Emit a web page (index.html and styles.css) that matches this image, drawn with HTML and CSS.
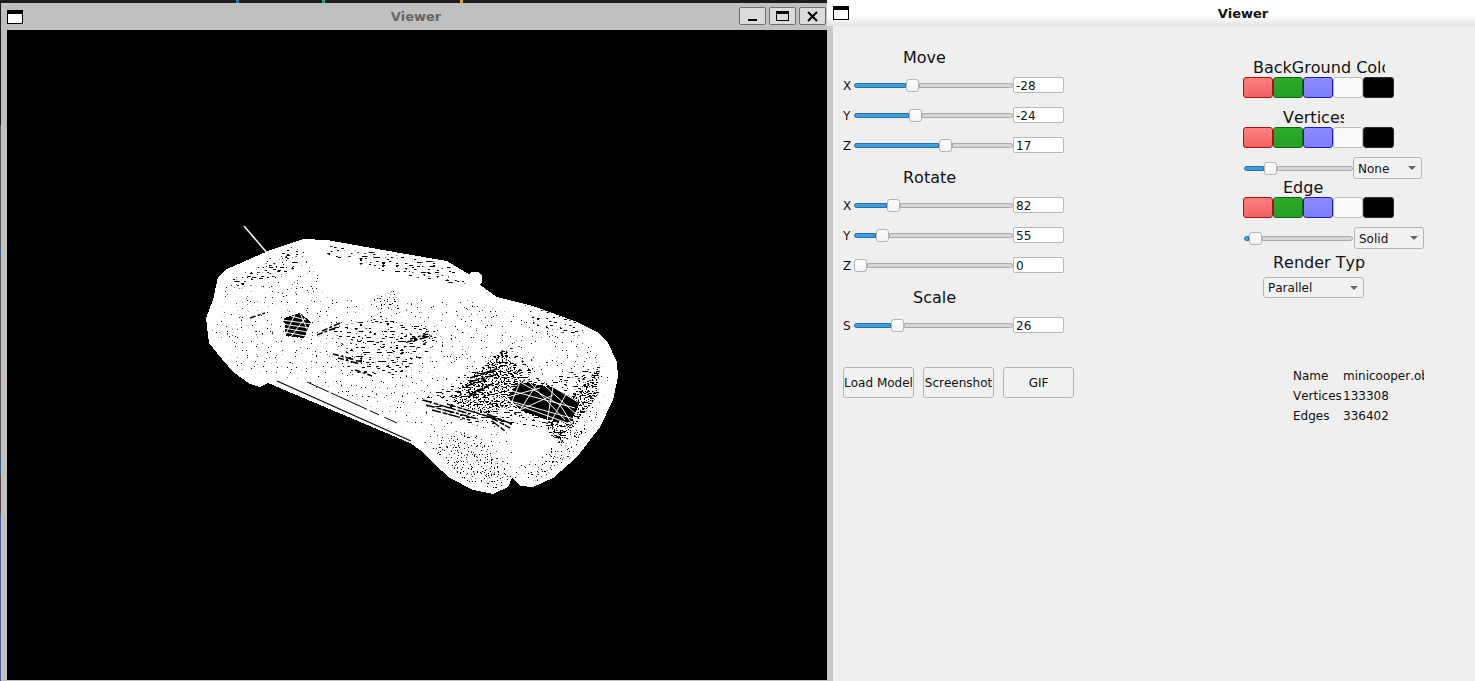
FILE: index.html
```html
<!DOCTYPE html>
<html lang="en">
  <head>
    <meta charset="UTF-8" />
    <title>Viewer</title>
    <link rel="stylesheet" href="styles.css">
  </head>
  <body>
    <div class="desktop">
      <span class="strip"></span>
      <span class="tick tick-a"></span>
      <span class="tick tick-b"></span>
      <span class="tick tick-c"></span>

      <!-- render window -->
      <section class="window window-render">
        <header class="render-title">
          <span class="win-icon"></span>
          <span class="render-name">Viewer</span>
          <span class="win-button">
            <svg width="25" height="16" viewBox="0 0 25 16"><path d="M8 11h9v2H8z" /></svg>
          </span>
          <span class="win-button">
            <svg width="25" height="16" viewBox="0 0 25 16"><path d="M6 3h13v10H6zM7 6v6h11V6z" fill-rule="evenodd" /></svg>
          </span>
          <span class="win-button">
            <svg width="25" height="16" viewBox="0 0 25 16"><path d="M8 4l9 9M17 4l-9 9" fill="none" stroke="#000" stroke-width="2" /></svg>
          </span>
        </header>
        <div class="gl-view">
          <svg class="car" viewBox="7 30 820 650">
            <defs>
              <!-- wireframe gaps: thresholded noise over a black region -->
              <filter id="speckLight" x="0" y="0" width="1" height="1" color-interpolation-filters="sRGB">
                <feTurbulence type="fractalNoise" baseFrequency="0.8" numOctaves="1" seed="4" />
                <feColorMatrix values="0 0 0 0 0  0 0 0 0 0  0 0 0 0 0  0 0 0 30 -21" />
                <feComposite in="SourceGraphic" operator="in" />
              </filter>
              <filter id="speckMid" x="0" y="0" width="1" height="1" color-interpolation-filters="sRGB">
                <feTurbulence type="fractalNoise" baseFrequency="0.7" numOctaves="1" seed="9" />
                <feColorMatrix values="0 0 0 0 0  0 0 0 0 0  0 0 0 0 0  0 0 0 30 -19.5" />
                <feComposite in="SourceGraphic" operator="in" />
              </filter>
              <filter id="speckDash" x="0" y="0" width="1" height="1" color-interpolation-filters="sRGB">
                <feTurbulence type="fractalNoise" baseFrequency="0.22 0.8" numOctaves="1" seed="2" />
                <feColorMatrix values="0 0 0 0 0  0 0 0 0 0  0 0 0 0 0  0 0 0 30 -18.8" />
                <feComposite in="SourceGraphic" operator="in" />
              </filter>
              <filter id="speckDense" x="0" y="0" width="1" height="1" color-interpolation-filters="sRGB">
                <feTurbulence type="fractalNoise" baseFrequency="0.5 0.9" numOctaves="1" seed="7" />
                <feColorMatrix values="0 0 0 0 0  0 0 0 0 0  0 0 0 0 0  0 0 0 30 -16.2" />
                <feComposite in="SourceGraphic" operator="in" />
              </filter>
            </defs>

            <path class="antenna" d="M244 226L268 254" />
            <circle class="body" cx="475" cy="279" r="7.5" />
            <path class="body" d="M227 269L268 251L303 239L327 240L400 253L447 261L467 273L483 287L497 297L533 306L577 322L597 332L608 343L617 362L618 377L613 400L600 427L577 457L553 478L533 487L520 486L512 478L508 487L493 494L473 490L450 478L433 463L423 452L410 443L268 383L260 387L250 384L233 372L217 353L209 343L206 318L213 300L218 277Z" />

            <!-- sill -->
            <path class="line-black" d="M277 381L411 441" stroke-width="1.2" />
            <path class="line-black dash-sill" d="M307 382L397 423" />

            <!-- speckle regions -->
            <path class="speck-light" d="M222 285L300 250L340 300L470 300L590 340L610 380L590 440L540 482L470 485L420 440L380 410L280 375L240 370L212 330Z" />
            <path class="speck-dash" d="M232 278L292 247L306 250L296 268L240 290Z" />
            <path class="speck-dash" d="M322 245L400 256L448 264L468 286L385 272L322 255Z" />
            <path class="speck-dash" d="M330 328L380 318L440 330L430 350L400 376L350 372L340 350Z" />
            <path class="speck-mid" d="M373 297L395 290L400 310L378 310Z" />
            <path class="speck-dash" d="M525 305L580 322L585 338L530 325Z" />
            <path class="speck-dash" d="M420 398L470 370L510 345L540 380L600 365L598 395L560 445L520 425L470 425Z" />
            <path class="speck-dense" d="M470 378L505 348L525 380L510 408L480 415L450 400Z" />
            <path class="speck-dense" d="M575 395L600 365L598 395L560 445L545 425Z" />
            <path class="speck-mid" d="M425 445L470 430L510 465L500 490L470 485Z" />
            <path class="speck-mid" d="M520 470L590 420L570 458L535 485Z" />

            <!-- dark spots -->
            <path class="line-black dash-spot" stroke-width="1.5" d="M407 342L432 336M410 339L428 334M333 354L362 362M338 358L360 364M317 335L340 326M322 331L340 323M250 318L265 313M355 370L372 376" />

            <!-- rear window -->
            <path class="dark" d="M284 318L300 313L311 322L304 338L286 336Z" />
            <path class="line-white" d="M282 320L312 324M282 324L310 328M283 328L308 332M284 332L306 336M291 316L306 320M296 312L284 338M305 318L290 338M300 313L310 336" />

            <!-- grille -->
            <path class="dark" d="M507 397L520 382L553 387L580 402L571 422L547 420L520 410Z" />
            <path class="line-white" d="M507 400L578 420M512 391L575 408M515 404L570 424M520 382L510 406M520 382L560 405L572 424M537 384L520 410M553 387L547 421M553 387L578 402M566 394L552 420M530 383L565 420M507 397L540 388M520 410L553 395M545 386L578 416" />

            <!-- hatching in front of the hood -->
            <path class="line-black dash-hatch" stroke-width="1.5" d="M423 400L470 414M426 405L478 419M432 410L470 420M447 404L500 420M490 417L510 428M492 421L505 431M487 414L512 424M470 378L500 368M470 382L498 374M466 386L486 380M474 392L492 384M468 397L485 388" />

            <!-- front lamp -->
            <ellipse class="body" cx="530" cy="443" rx="22" ry="17" />
          </svg>
        </div>
      </section>

      <!-- control window -->
      <section class="window window-panel">
        <header class="panel-title">
          <span class="win-icon"></span>
          <span class="panel-name">Viewer</span>
        </header>
        <div class="panel-body">
          <div class="column-left">
            <h2 class="heading heading-left">Move</h2>
            <div class="axis-row">
              <span class="axis-label">X</span>
              <div class="slider"><i class="fill" style="width: 52px"></i><b class="thumb"></b><i class="rest"></i></div>
              <span class="value">-28</span>
            </div>
            <div class="axis-row">
              <span class="axis-label">Y</span>
              <div class="slider"><i class="fill" style="width: 55px"></i><b class="thumb"></b><i class="rest"></i></div>
              <span class="value">-24</span>
            </div>
            <div class="axis-row">
              <span class="axis-label">Z</span>
              <div class="slider"><i class="fill" style="width: 85px"></i><b class="thumb"></b><i class="rest"></i></div>
              <span class="value">17</span>
            </div>

            <h2 class="heading heading-left next">Rotate</h2>
            <div class="axis-row">
              <span class="axis-label">X</span>
              <div class="slider"><i class="fill" style="width: 33px"></i><b class="thumb"></b><i class="rest"></i></div>
              <span class="value">82</span>
            </div>
            <div class="axis-row">
              <span class="axis-label">Y</span>
              <div class="slider"><i class="fill" style="width: 22px"></i><b class="thumb"></b><i class="rest"></i></div>
              <span class="value">55</span>
            </div>
            <div class="axis-row">
              <span class="axis-label">Z</span>
              <div class="slider"><i class="fill" style="width: 0"></i><b class="thumb"></b><i class="rest"></i></div>
              <span class="value">0</span>
            </div>

            <h2 class="heading heading-left next heading-scale">Scale</h2>
            <div class="axis-row">
              <span class="axis-label">S</span>
              <div class="slider"><i class="fill" style="width: 37px"></i><b class="thumb"></b><i class="rest"></i></div>
              <span class="value">26</span>
            </div>

            <div class="actions">
              <button class="action">Load Model</button>
              <button class="action">Screenshot</button>
              <button class="action">GIF</button>
            </div>
          </div>

          <div class="column-right">
            <h2 class="heading clip clip-bg">BackGround Color</h2>
            <div class="swatches">
              <span class="swatch red"></span><span class="swatch green"></span><span class="swatch blue"></span><span class="swatch white"></span><span class="swatch black"></span>
            </div>

            <h2 class="heading clip clip-vertices">Vertices</h2>
            <div class="swatches">
              <span class="swatch red"></span><span class="swatch green"></span><span class="swatch blue"></span><span class="swatch white"></span><span class="swatch black"></span>
            </div>
            <div class="style-row">
              <div class="slider slider-small"><i class="fill" style="width: 20px"></i><b class="thumb"></b><i class="rest"></i></div>
              <div class="combo combo-none">None</div>
            </div>

            <h2 class="heading clip clip-edge">Edge</h2>
            <div class="swatches">
              <span class="swatch red"></span><span class="swatch green"></span><span class="swatch blue"></span><span class="swatch white"></span><span class="swatch black"></span>
            </div>
            <div class="style-row">
              <div class="slider slider-small"><i class="fill" style="width: 5px"></i><b class="thumb"></b><i class="rest"></i></div>
              <div class="combo combo-solid">Solid</div>
            </div>

            <h2 class="heading clip clip-render">Render Type</h2>
            <div class="combo combo-parallel">Parallel</div>

            <dl class="info">
              <dt>Name</dt><dd>minicooper.obj</dd>
              <dt>Vertices</dt><dd>133308</dd>
              <dt>Edges</dt><dd>336402</dd>
            </dl>
          </div>
        </div>
      </section>
    </div>
  </body>
</html>
```

FILE: styles.css
```css
* {
  box-sizing: border-box;
}

html,
body {
  margin: 0;
  height: 100%;
  overflow: hidden;
}

body {
  font-family: "DejaVu Sans", sans-serif;
  font-size: 12px;
  font-kerning: none;
  color: #111;
}

.desktop {
  position: relative;
  width: 1475px;
  height: 681px;
  background: #1c1c1c;
  overflow: hidden;
}

/* what peeks out of the desktop behind the windows */
.strip {
  position: absolute;
  left: 0;
  top: 125px;
  width: 1px;
  height: 556px;
  background: linear-gradient(
    #555 0 22%,
    #3f5a7c 22% 24%,
    #555 24% 45%,
    #6e4a4a 45% 47%,
    #555 47% 60%,
    #3f5a7c 60% 63%,
    #5a4040 63% 70%,
    #3f5f8c 70% 100%
  );
}
.tick {
  position: absolute;
  top: 0;
  width: 3px;
  height: 3px;
}
.tick-a {
  left: 236px;
  background: #1f7fb0;
}
.tick-b {
  left: 322px;
  background: #1aa088;
}
.tick-c {
  left: 460px;
  background: #e0a020;
}

.window {
  position: absolute;
  display: flex;
  flex-direction: column;
}
.window-render {
  left: 1px;
  top: 3px;
  width: 826px;
  height: 678px;
  background: #c0c0c0;
  padding: 0 0 1px 6px;
}
.window-panel {
  left: 827px;
  top: 0;
  width: 648px;
  height: 681px;
  background: #c9c9c9;
  border-top-left-radius: 3px;
}

.win-icon {
  flex: none;
  width: 16px;
  height: 14px;
  background: #fff;
  border: 1px solid #000;
  border-top-width: 4px;
}

/* left window */
.render-title {
  flex: none;
  height: 27px;
  display: flex;
  align-items: center;
  gap: 3px;
  padding-top: 1px;
  padding-right: 1px;
}
.render-name {
  flex: 1;
  padding-left: 78px;
  padding-right: 8px;
  padding-bottom: 2px;
  text-align: center;
  font-size: 13px;
  font-weight: bold;
  color: #666;
}
.win-button {
  flex: none;
  width: 27px;
  height: 18px;
  margin-top: -2px;
  background: #dcdcdc;
  border: 1px solid #707070;
  border-radius: 2px;
}
.win-button svg {
  display: block;
}
.gl-view {
  flex: 1;
  background: #000;
  min-height: 0;
}
.car {
  display: block;
  width: 820px;
  height: 650px;
}
.car .body {
  fill: #fff;
  shape-rendering: crispEdges;
}
.car .dark {
  fill: #000;
  shape-rendering: crispEdges;
}
.antenna {
  fill: none;
  stroke: #fff;
  stroke-width: 1.5;
}
.line-white {
  fill: none;
  stroke: #fff;
  stroke-width: 1;
}
.line-black {
  fill: none;
  stroke: #000;
}
.speck-light {
  filter: url(#speckLight);
}
.speck-mid {
  filter: url(#speckMid);
}
.speck-dash {
  filter: url(#speckDash);
}
.speck-dense {
  filter: url(#speckDense);
}
.dash-sill {
  stroke-width: 1;
  stroke-dasharray: 24 2 40 3 10 6;
}
.dash-spot {
  stroke-dasharray: 6 2 3 2 8 3;
}
.dash-hatch {
  stroke-dasharray: 9 2 5 1 12 2 3 2;
}

/* right window */
.panel-title {
  flex: none;
  height: 26px;
  display: flex;
  align-items: center;
  padding: 0 16px 0 6px;
  background: linear-gradient(#fff 0 62%, #e2e2e2 100%);
}
.panel-title .win-icon {
  margin-top: 2px;
  margin-bottom: 3px;
}
.panel-name {
  flex: 1;
  padding-left: 178px;
  text-align: center;
  font-size: 13px;
  font-weight: bold;
  color: #111;
}
.panel-body {
  flex: 1;
  margin-left: 6px;
  background: #efefef;
  display: flex;
  align-items: flex-start;
}

.heading {
  margin: 0;
  font-size: 16px;
  font-weight: normal;
  line-height: 22px;
  white-space: nowrap;
}
.clip {
  height: 20px;
  overflow: hidden;
}

.column-left {
  flex: none;
  width: 231px;
  margin-left: 10px;
  padding-top: 21px;
}
.heading-left {
  height: 23px;
  padding-left: 60px;
}
.heading.next {
  margin-top: 7px;
}
.heading-scale {
  padding-left: 70px;
}
.axis-row {
  height: 30px;
  display: flex;
  align-items: center;
}
.axis-label {
  flex: none;
  width: 11px;
  padding-top: 1px;
}
.value {
  flex: none;
  width: 51px;
  height: 16px;
  padding-left: 2px;
  background: #fff;
  border: 1px solid #b8b8b8;
  border-radius: 2px;
  line-height: 16px;
}

.slider {
  flex: none;
  width: 159px;
  height: 13px;
  display: flex;
  align-items: center;
}
.fill,
.rest {
  display: block;
  height: 5px;
  border: 1px solid;
}
.fill {
  flex: none;
  background: #3d9fe0;
  border-color: #2a6f9f;
  border-radius: 3px 0 0 3px;
}
.fill[style="width: 0"] {
  border: 0;
}
.rest {
  flex: 1;
  background: #d6d6d6;
  border-color: #ababab;
  border-radius: 0 3px 3px 0;
}
.thumb {
  flex: none;
  width: 13px;
  height: 13px;
  background: linear-gradient(#fdfdfd, #f4f4f4);
  border: 1px solid #b4b4b4;
  border-radius: 3px;
}

.actions {
  display: flex;
  gap: 9px;
  margin-top: 27px;
}
.action {
  width: 71px;
  height: 31px;
  padding: 0;
  font: inherit;
  color: inherit;
  white-space: nowrap;
  background: #f1f1f1;
  border: 1px solid #b4b4b4;
  border-radius: 3px;
}

.column-right {
  flex: none;
  width: 190px;
  margin-left: 169px;
  padding-top: 31px;
}
.clip-bg {
  width: 142px;
  padding-left: 10px;
}
.clip-vertices {
  width: 101px;
  padding-left: 40px;
}
.clip-edge {
  width: 120px;
  padding-left: 40px;
  margin-top: -2px;
}
.clip-render {
  width: 122px;
  padding-left: 30px;
  margin-top: 3px;
  margin-bottom: 5px;
}
.swatches {
  display: flex;
  height: 21px;
  margin-bottom: 9px;
}
.swatch {
  width: 30px;
  height: 21px;
  border: 1px solid;
  border-radius: 3px;
}
.swatch:last-child {
  width: 31px;
}
.red {
  background: linear-gradient(#ff8080, #f06464);
  border-color: #b80c0c;
}
.green {
  background: linear-gradient(#2bab2b, #279f27);
  border-color: #0b670b;
}
.blue {
  background: linear-gradient(#8c8cff, #7c7cff);
  border-color: #1c1cc0;
}
.white {
  background: #fafafa;
  border-color: #bcbcbc;
}
.black {
  background: #000;
  border-color: #2c2c2c;
}

.style-row {
  display: flex;
  align-items: center;
  height: 22px;
  padding-left: 1px;
}
.slider-small {
  width: 109px;
}
.combo {
  position: relative;
  flex: none;
  height: 22px;
  padding-left: 4px;
  line-height: 22px;
  background: #f1f1f1;
  border: 1px solid #b4b4b4;
  border-radius: 3px;
}
.combo::after {
  content: "";
  position: absolute;
  right: 5px;
  top: 8px;
  border: 4px solid transparent;
  border-top: 4px solid #666;
}
.combo-none {
  width: 69px;
}
.combo-solid {
  width: 70px;
  margin-left: 1px;
}
.combo-parallel {
  width: 101px;
  height: 21px;
  margin-left: 20px;
  line-height: 20px;
}

.info {
  display: grid;
  grid-template-columns: 50px 81px;
  grid-auto-rows: 20px;
  margin: 68px 0 0 50px;
  line-height: 20px;
  white-space: nowrap;
}
.info dt,
.info dd {
  margin: 0;
  overflow: hidden;
}
.info dt {
  overflow: visible;
}
```
